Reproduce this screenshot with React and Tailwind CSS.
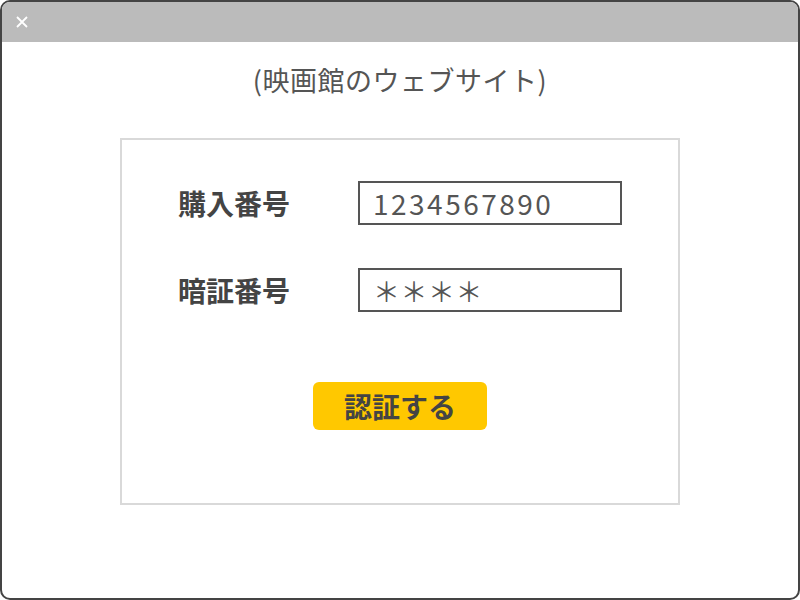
import React from "react";

const font = { fontFamily: '"Noto Sans CJK JP", "Noto Sans", sans-serif' };

function Field({ label, children }) {
  return (
    <div className="flex items-center">
      <div className="w-[180px] text-[28px] font-bold text-[#444] leading-none">{label}</div>
      <div className="w-[264px] h-[44px] border-2 border-[#555] flex items-center pl-[13px]">
        {children}
      </div>
    </div>
  );
}

export default function App() {
  return (
    <div className="w-[800px] h-[600px] bg-white" style={font}>
      <div className="w-full h-full border-2 border-[#444] rounded-[10px] overflow-hidden flex flex-col">
        {/* タイトルバー */}
        <div className="h-[40px] bg-[#bbbbbb] flex items-center pl-[13px] shrink-0">
          <svg width="14" height="14" viewBox="0 0 14 14">
            <path d="M2 2 L12 12 M12 2 L2 12" stroke="#fff" strokeWidth="1.8" />
          </svg>
        </div>
        <div className="flex-1 flex flex-col items-center">
          <div className="mt-[20px] text-[27px] text-[#555] leading-[36px] tracking-[0.5px]">
            (映画館のウェブサイト)
          </div>
          <div className="mt-[40px] w-[560px] h-[367px] border-2 border-[#d9d9d9] flex flex-col pl-[56px] pt-[41px]">
            <Field label="購入番号">
              <span className="text-[28px] text-[#555] leading-none tracking-[2.5px]">1234567890</span>
            </Field>
            <div className="h-[43px]" />
            <Field label="暗証番号">
              <span className="text-[27px] text-[#555] leading-none tracking-[0.5px]">＊＊＊＊</span>
            </Field>
            <div className="flex justify-center pr-[56px] mt-[70px]">
              <button className="w-[174px] h-[48px] rounded-[6px] bg-[#ffc800] text-[28px] font-bold text-[#444] leading-none">
                認証する
              </button>
            </div>
          </div>
        </div>
      </div>
    </div>
  );
}
